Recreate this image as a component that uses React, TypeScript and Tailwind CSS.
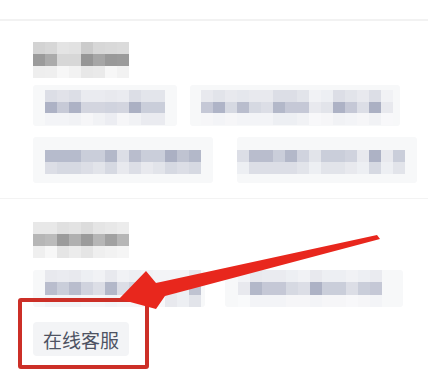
type RGB = [number, number, number];

const GRAY: RGB = [150, 150, 150];
const BLUE: RGB = [138, 145, 172];

const shade = (t: number, base: RGB) => {
	const c = base.map((v) => Math.round(255 - t * (255 - v)));
	return `rgb(${c[0]},${c[1]},${c[2]})`;
};

interface MosaicProps {
	rows: number[][];
	heights: number[];
	base: RGB;
	cell?: number;
}

// blurred pixel blocks, drawn as a small svg picture
function Mosaic({ rows, heights, base, cell = 12 }: MosaicProps) {
	const cols = rows[0].length;
	const width = cols * cell;
	const height = heights.reduce((a, b) => a + b, 0);
	let y = 0;
	return (
		<svg width={width} height={height} className="block shrink-0">
			{rows.map((row, r) => {
				const top = y;
				y += heights[r];
				return row.map((t, c) => (
					<rect
						key={`${r}-${c}`}
						x={c * cell}
						y={top}
						width={cell}
						height={heights[r]}
						fill={shade(t, base)}
					/>
				));
			})}
		</svg>
	);
}

function Chip({
	width,
	height,
	pad,
	children,
}: {
	width: string;
	height: string;
	pad: string;
	children: React.ReactNode;
}) {
	return (
		<div className={`flex shrink-0 rounded-[3px] bg-[#f7f8f9] ${width} ${height} ${pad}`}>
			{children}
		</div>
	);
}

export default function App() {
	return (
		<div className="relative h-[379px] w-[428px] overflow-hidden bg-white font-['Noto_Sans_CJK_SC',sans-serif]">
			<div className="h-[19px]" />
			<div className="h-[2px] bg-[#f2f2f2]" />

			{/* first group */}
			<div className="flex flex-col pl-[33px] pt-[21px] pb-[15px]">
				<Mosaic
					base={GRAY}
					heights={[12, 12, 12]}
					rows={[
						[0.42, 0.38, 0.26, 0.28, 0.5, 0.38, 0.36, 0.34],
						[0.95, 0.8, 0.38, 0.38, 1, 0.85, 0.97, 0.95],
						[0.16, 0.15, 0.08, 0.12, 0.22, 0.2, 0.08, 0.12],
					]}
				/>
				<div className="mt-[7px] flex gap-[13px]">
					<Chip width="w-[144px]" height="h-[41px]" pad="pl-[12px] pt-[5px]">
						<Mosaic
							base={BLUE}
							heights={[12, 11, 12]}
							rows={[
								[0.3, 0.26, 0.3, 0.18, 0.18, 0.2, 0.18, 0.3, 0.24, 0.24],
								[0.7, 0.48, 0.7, 0.38, 0.38, 0.4, 0.38, 0.72, 0.45, 0.45],
								[0.1, 0.1, 0.12, 0.08, 0.12, 0.16, 0.08, 0.12, 0.18, 0.18],
							]}
						/>
					</Chip>
					<Chip width="w-[210px]" height="h-[41px]" pad="pl-[11px] pt-[5px]">
						<Mosaic
							base={BLUE}
							heights={[12, 11, 12]}
							rows={[
								[0.2, 0.25, 0.2, 0.22, 0.2, 0.2, 0.3, 0.3, 0.25, 0.12, 0.15, 0.3, 0.25, 0.2, 0.3, 0.12],
								[0.5, 0.68, 0.35, 0.6, 0.35, 0.3, 0.65, 0.5, 0.5, 0.2, 0.25, 0.7, 0.5, 0.3, 0.72, 0.2],
								[0.08, 0.1, 0.08, 0.1, 0.1, 0.1, 0.15, 0.15, 0.12, 0.06, 0.08, 0.12, 0.1, 0.08, 0.12, 0.06],
							]}
						/>
					</Chip>
				</div>
				<div className="mt-[11px] flex gap-[24px]">
					<Chip width="w-[180px]" height="h-[46px]" pad="pl-[12px] pt-[13px]">
						<Mosaic
							base={BLUE}
							heights={[12, 12]}
							rows={[
								[0.62, 0.62, 0.62, 0.45, 0.45, 0.65, 0.3, 0.6, 0.45, 0.45, 0.72, 0.55, 0.65],
								[0.3, 0.35, 0.35, 0.3, 0.25, 0.35, 0.2, 0.3, 0.2, 0.25, 0.35, 0.3, 0.35],
							]}
						/>
					</Chip>
					<Chip width="w-[180px]" height="h-[46px]" pad="pl-0 pt-[13px]">
						<Mosaic
							base={BLUE}
							heights={[12, 12]}
							rows={[
								[0.3, 0.6, 0.6, 0.45, 0.65, 0.4, 0.25, 0.45, 0.45, 0.4, 0.2, 0.7, 0.2, 0.45],
								[0.15, 0.3, 0.3, 0.3, 0.3, 0.25, 0.15, 0.25, 0.25, 0.2, 0.15, 0.35, 0.15, 0.25],
							]}
						/>
					</Chip>
				</div>
			</div>

			<div className="h-[1px] bg-[#f3f3f3]" />

			{/* second group */}
			<div className="flex flex-col pl-[33px] pt-[23px]">
				<Mosaic
					base={GRAY}
					heights={[12, 12, 12]}
					rows={[
						[0.22, 0.22, 0.3, 0.27, 0.33, 0.25, 0.22, 0.18],
						[0.7, 0.65, 0.95, 0.75, 0.95, 0.7, 0.9, 0.7],
						[0.15, 0.08, 0.25, 0.18, 0.25, 0.15, 0.12, 0.1],
					]}
				/>
				<div className="mt-[12px] flex gap-[20px]">
					<Chip width="w-[172px]" height="h-[37px]" pad="pl-[12px] pt-0">
						<Mosaic
							base={BLUE}
							heights={[12, 13, 12]}
							rows={[
								[0.2, 0.18, 0.2, 0.15, 0.12, 0.2, 0.12, 0.15, 0.12, 0.1, 0.1, 0.1, 0.2],
								[0.6, 0.45, 0.6, 0.4, 0.3, 0.65, 0.3, 0.4, 0.3, 0.2, 0.2, 0.15, 0.55],
								[0.1, 0.1, 0.1, 0.08, 0.08, 0.1, 0.08, 0.08, 0.08, 0.06, 0.2, 0.15, 0.25],
							]}
						/>
					</Chip>
					<Chip width="w-[178px]" height="h-[37px]" pad="pl-[13px] pt-0">
						<Mosaic
							base={BLUE}
							heights={[12, 13, 12]}
							rows={[
								[0.1, 0.2, 0.18, 0.18, 0.15, 0.12, 0.2, 0.15, 0.15, 0.12, 0.15, 0.18],
								[0.2, 0.65, 0.5, 0.5, 0.35, 0.3, 0.7, 0.45, 0.45, 0.3, 0.45, 0.5],
								[0.05, 0.1, 0.1, 0.1, 0.08, 0.08, 0.1, 0.08, 0.08, 0.06, 0.08, 0.1],
							]}
						/>
					</Chip>
				</div>
				<div className="mt-[15px] flex">
					<button className="flex h-[34px] items-center rounded-[4px] bg-[#f3f4f6] px-[10px] text-[19px] leading-none text-[#4e5363]">
						在线客服
					</button>
				</div>
			</div>

			{/* annotation: red box and arrow */}
			<div className="pointer-events-none absolute left-[18px] top-[298px] h-[71px] w-[131px] rounded-[3px] border-[4px] border-[#cc2f27]" />
			<svg
				className="pointer-events-none absolute left-0 top-0"
				width={428}
				height={379}
			>
				<polygon
					points="119,299 146,271 156,283 377,235 380,239 165,296 156,309"
					fill="#e8271d"
				/>
			</svg>
		</div>
	);
}
